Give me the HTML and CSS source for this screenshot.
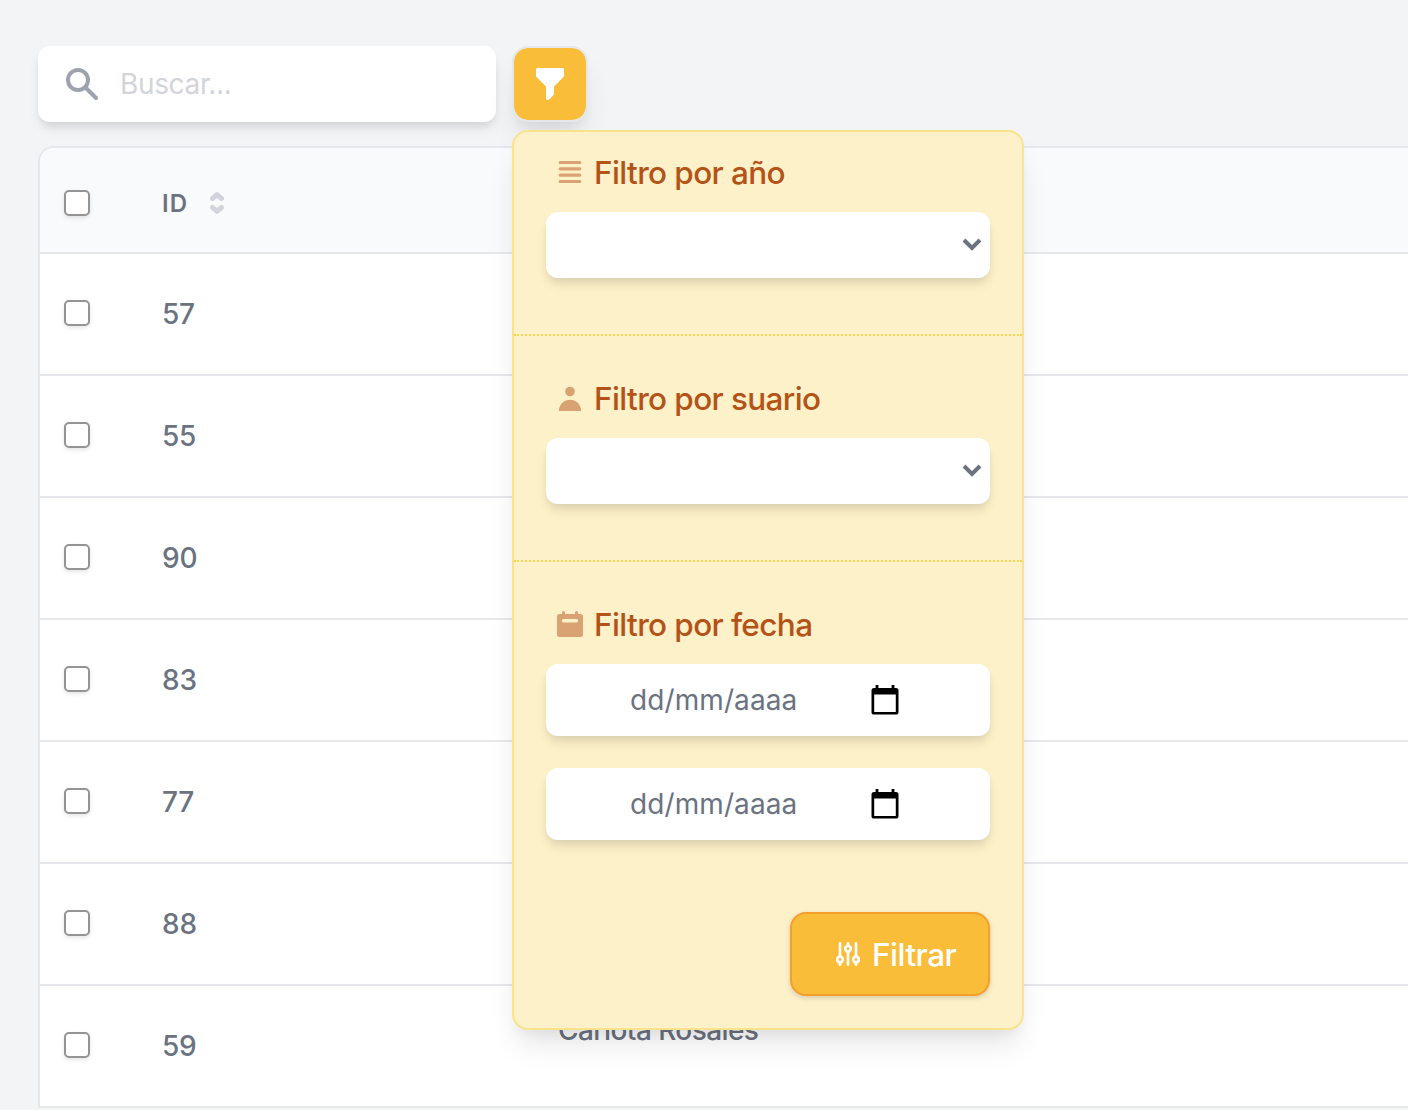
FILE: index.html
```html
<!DOCTYPE html>
<html lang="es">
<head>
<meta charset="utf-8">
<title>Listado</title>
<link rel="stylesheet" href="styles.css">
</head>
<body>
<main class="page">
  <div class="toolbar">
    <label class="search">
      <svg class="search-icon" viewBox="0 0 34 34" fill="none" stroke="currentColor" stroke-width="4"><circle cx="13" cy="13" r="10"/><path d="M20.5 20.5 31 31" stroke-linecap="round"/></svg>
      <span class="search-placeholder">Buscar...</span>
    </label>
    <div class="filter">
      <button class="filter-toggle" aria-label="Filtros">
        <svg width="28" height="32" viewBox="0 0 28 32" fill="#fff"><path d="M1.5 0h25Q28 0 28 1.500V8.500L18 18.500V26.500L13.500 31.200Q12.500 32 11.500 32Q10 32 10 30.500V18.500L0 8.500V1.500Q0 0 1.500 0Z"/></svg>
      </button>
      <div class="popover">
        <section class="group">
          <h3 class="title">
            <svg class="title-icon" viewBox="0 0 28 28" stroke="currentColor" stroke-width="3.200" stroke-linecap="round"><path d="M4.200 4.500h19.600M4.200 10.800h19.600M4.200 17.200h19.600M4.200 23.500h19.600"/></svg>
            <span>Filtro por año</span>
          </h3>
          <div class="select"><svg width="20" height="14" viewBox="0 0 20 14" fill="none" stroke="#6b7280" stroke-width="4"><path d="M2 2l8 8 8-8"/></svg></div>
        </section>
        <section class="group">
          <h3 class="title">
            <svg class="title-icon" viewBox="0 0 28 28" fill="currentColor"><circle cx="14" cy="7.500" r="4.800"/><path d="M2.800 27C3.300 20 8 15.800 14 15.800S24.700 20 25.200 27Z"/></svg>
            <span>Filtro por suario</span>
          </h3>
          <div class="select"><svg width="20" height="14" viewBox="0 0 20 14" fill="none" stroke="#6b7280" stroke-width="4"><path d="M2 2l8 8 8-8"/></svg></div>
        </section>
        <section class="group">
          <h3 class="title">
            <svg class="title-icon" viewBox="0 0 28 28" fill="currentColor"><path fill-rule="evenodd" d="M3.500 4H6V2.500a1.500 1.500 0 0 1 3 0V4h10V2.500a1.500 1.500 0 0 1 3 0V4h2.500A2.500 2.500 0 0 1 27 6.500V24.500A2.500 2.500 0 0 1 24.500 27H3.500A2.500 2.500 0 0 1 1 24.500V6.500A2.500 2.500 0 0 1 3.500 4ZM7.500 9a1.700 1.700 0 0 0 0 3.400h13a1.700 1.700 0 0 0 0-3.400Z"/></svg>
            <span>Filtro por fecha</span>
          </h3>
          <div class="date"><span class="date-text">dd/mm/aaaa</span><svg width="28" height="30" viewBox="0 0 28 30"><path fill-rule="evenodd" d="M4.600 0h2.800v3h13.200V0h2.800v3H25Q27.500 3 27.500 5.500V27Q27.500 29.600 25 29.600H3Q.5 29.600 .5 27V5.500Q.5 3 3 3H4.600ZM3.200 9.500V27H24.800V9.500Z"/></svg></div>
          <div class="date"><span class="date-text">dd/mm/aaaa</span><svg width="28" height="30" viewBox="0 0 28 30"><path fill-rule="evenodd" d="M4.600 0h2.800v3h13.200V0h2.800v3H25Q27.500 3 27.500 5.500V27Q27.500 29.600 25 29.600H3Q.5 29.600 .5 27V5.500Q.5 3 3 3H4.600ZM3.200 9.500V27H24.800V9.500Z"/></svg></div>
          <button class="apply">
            <svg width="24" height="24" viewBox="0 0 24 24" fill="none" stroke="#fff" stroke-width="2.700" stroke-linecap="round"><path d="M4 1.300V14M4 21v1.700M12 1.300V3M12 10.500v12.200M20 1.300V14M20 21v1.700"/><circle cx="4" cy="17.500" r="2.800"/><circle cx="12" cy="6.800" r="2.800"/><circle cx="20" cy="17.500" r="2.800"/></svg>
            <span>Filtrar</span>
          </button>
        </section>
      </div>
    </div>
  </div>
  <div class="table">
    <div class="row head"><span class="check"></span><span class="id">ID<svg class="sort" width="14" height="22" viewBox="0 0 14 22" fill="none" stroke="#d1d5db" stroke-width="5" stroke-linecap="round" stroke-linejoin="round"><path d="M2.500 6.500 7 2.700 11.500 6.500M2.500 15.500 7 19.300 11.500 15.500"/></svg></span></div>
    <div class="row"><span class="check"></span><span class="id">57</span></div>
    <div class="row"><span class="check"></span><span class="id">55</span></div>
    <div class="row"><span class="check"></span><span class="id">90</span></div>
    <div class="row"><span class="check"></span><span class="id">83</span></div>
    <div class="row"><span class="check"></span><span class="id">77</span></div>
    <div class="row"><span class="check"></span><span class="id">88</span></div>
    <div class="row"><span class="check"></span><span class="id">59</span><span class="name">Carlota Rosales</span></div>
  </div>
</main>
</body>
</html>
```
FILE: styles.css
```css
* { box-sizing: border-box; }
body {
  margin: 0;
  height: 1110px;
  overflow: hidden;
  background: #f3f4f6;
  font-family: Inter, "Liberation Sans", sans-serif;
  color: #6b7280;
}
svg { display: block; flex: none; }
button { font: inherit; margin: 0; }
.page { padding: 46px 0 0 38px; }
.toolbar { display: flex; gap: 16px; margin-bottom: 24px; }
.search {
  width: 458px;
  height: 76px;
  display: flex;
  align-items: center;
  padding-left: 27px;
  gap: 21px;
  background: #fff;
  border-radius: 12px;
  box-shadow: 0 8px 12px -2px rgba(0,0,0,.1), 0 4px 8px -2px rgba(0,0,0,.06);
}
.search-icon { width: 34px; height: 34px; color: #9ca3af; }
.search-placeholder { font-size: 28px; color: #d1d5db; letter-spacing: -.35px; }
.filter { position: relative; }
.filter-toggle {
  width: 76px;
  height: 76px;
  display: flex;
  align-items: center;
  justify-content: center;
  padding: 0;
  border: 2px solid #e5e7eb;
  border-radius: 16px;
  background: #fabd39;
  background-clip: padding-box;
  box-shadow: 0 20px 30px -6px rgba(0,0,0,.1), 0 8px 12px -4px rgba(0,0,0,.05);
}
.popover {
  position: absolute;
  z-index: 2;
  top: 84px;
  left: 0;
  width: 512px;
  background: #fdf1c9;
  border: 2px solid #fbe38d;
  border-radius: 16px;
  box-shadow: 0 20px 30px -6px rgba(0,0,0,.1), 0 8px 12px -4px rgba(0,0,0,.05);
}
.group { padding: 38px 32px 56px; border-bottom: 2px dotted #f9d34f; }
.group:first-child { padding-top: 16px; }
.group:last-child { padding-bottom: 32px; border-bottom: 0; }
.title {
  display: flex;
  align-items: center;
  gap: 10px;
  height: 48px;
  margin: 0 0 16px;
  padding-left: 10px;
  font-size: 31.500px;
  font-weight: 450;
  letter-spacing: -.62px;
  color: #b45317;
  white-space: nowrap;
}
.title-icon { width: 28px; height: 28px; color: #d9a273; }
.select, .date {
  display: flex;
  align-items: center;
  background: #fff;
  border-radius: 12px;
  box-shadow: 0 8px 12px -2px rgba(0,0,0,.1), 0 4px 8px -2px rgba(0,0,0,.06);
}
.select { height: 66px; justify-content: flex-end; padding-right: 8px; }
.date { height: 72px; justify-content: space-between; padding: 0 91px 0 84px; }
.date + .date { margin-top: 32px; }
.date-text { font-size: 28px; letter-spacing: .1px; }
.apply {
  display: flex;
  align-items: center;
  gap: 12px;
  width: 200px;
  height: 84px;
  margin: 72px 0 0 auto;
  padding: 0 0 0 44px;
  border: 2px solid #f59e2b;
  border-radius: 16px;
  background: #fabd39;
  color: #fff;
  font-size: 31.500px;
  font-weight: 500;
  letter-spacing: -.5px;
  box-shadow: 0 2px 6px rgba(0,0,0,.1), 0 2px 4px rgba(0,0,0,.06);
}
.table {
  border: 2px solid #e5e7eb;
  border-width: 2px 0 0 2px;
  border-radius: 16px 0 0 0;
  background: #fff;
  overflow: hidden;
}
.row {
  display: flex;
  align-items: center;
  height: 122px;
  padding-left: 24px;
  border-bottom: 2px solid #e5e7eb;
  font-size: 28px;
  font-weight: 500;
}
.head {
  height: 106px;
  padding-top: 6px;
  background: #f9fafb;
  font-size: 24px;
  font-weight: 600;
}
.check {
  width: 26px;
  height: 26px;
  border: 2px solid #949494;
  border-radius: 5px;
  background: #fff;
  box-shadow: 0 2px 4px rgba(0,0,0,.1);
  margin-top: -2px;
}
.head .check { margin-top: 0; }
.id { display: flex; align-items: center; width: 396px; margin-left: 72px; letter-spacing: -.2px; }
.head .id { letter-spacing: 1.200px; }
.sort { margin-left: 22px; }
.name { padding-bottom: 32px; letter-spacing: -.57px; font-weight: 450; }
```
